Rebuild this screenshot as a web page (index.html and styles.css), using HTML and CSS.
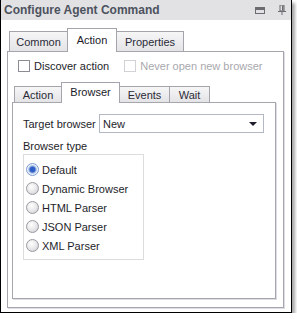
FILE: index.html
```html
<!DOCTYPE html>
<html lang="en">
<head>
    <meta charset="UTF-8">
    <title>Configure Agent Command</title>
    <link rel="stylesheet" href="styles.css">
</head>
<body>
    <div class="window">
        <div class="titlebar">
            <span class="title">Configure Agent Command</span>
            <svg class="tb-icon" width="10" height="7" viewBox="0 0 10 7">
                <rect x="0.5" y="0.5" width="9" height="6" fill="none" stroke="#6b6b70"/>
                <rect x="1" y="1" width="8" height="2" fill="#6b6b70"/>
            </svg>
            <svg class="tb-icon pin" width="8" height="10" viewBox="0 0 8 10">
                <rect x="2" y="0" width="4" height="6" fill="none" stroke="#6b6b70"/>
                <rect x="4" y="0.5" width="1.5" height="5" fill="#6b6b70"/>
                <rect x="0" y="6" width="8" height="1" fill="#6b6b70"/>
                <rect x="3.5" y="7" width="1" height="3" fill="#6b6b70"/>
            </svg>
        </div>
        <div class="content">
            <div class="tabs outer-tabs">
                <div class="tab tab-common">Common</div>
                <div class="tab tab-action active">Action</div>
                <div class="tab tab-props">Properties</div>
            </div>
            <div class="panel outer-panel">
                <div class="checks">
                    <label class="check"><span class="box"></span>Discover action</label>
                    <label class="check disabled"><span class="box"></span>Never open new browser</label>
                </div>
                <div class="tabs inner-tabs">
                    <div class="tab tab-action2">Action</div>
                    <div class="tab tab-browser active">Browser</div>
                    <div class="tab tab-events">Events</div>
                    <div class="tab tab-wait">Wait</div>
                </div>
                <div class="panel inner-panel">
                    <div class="field">
                        <span class="label">Target browser</span>
                        <div class="select">
                            <span>New</span>
                            <span class="arrow"></span>
                        </div>
                    </div>
                    <div class="group-label">Browser type</div>
                    <div class="group">
                        <div class="radio checked"><span class="dot"></span>Default</div>
                        <div class="radio"><span class="dot"></span>Dynamic Browser</div>
                        <div class="radio"><span class="dot"></span>HTML Parser</div>
                        <div class="radio"><span class="dot"></span>JSON Parser</div>
                        <div class="radio"><span class="dot"></span>XML Parser</div>
                    </div>
                </div>
            </div>
        </div>
    </div>
</body>
</html>
```

FILE: styles.css
```css
body {
    margin: 0;
    padding: 0;
    background: #fff;
    font-family: 'Liberation Sans', Arial, sans-serif;
    font-size: 11px;
    color: #1e1e2a;
}
.window {
    width: 290px;
    height: 312px;
    border: 1px solid #000;
    border-top: none;
    box-shadow: 3px 3px 3px rgba(0, 0, 0, 0.35);
    display: flex;
    flex-direction: column;
    background: #fff;
}
.titlebar {
    height: 20px;
    background: #e2e2e4;
    display: flex;
    align-items: center;
    padding: 0 5px 0 3px;
    box-sizing: border-box;
}
.title {
    flex: 1;
    font-weight: bold;
    font-size: 12px;
    color: #4d525e;
}
.tb-icon {
    display: block;
}
.tb-icon.pin {
    margin-left: 13px;
}
.content {
    flex: 1;
    display: flex;
    flex-direction: column;
    padding: 8px 7px 4px 6px;
}
.tabs {
    display: flex;
    align-items: flex-end;
    padding-left: 3px;
    position: relative;
    z-index: 1;
    margin-bottom: -1px;
}
.tab {
    box-sizing: border-box;
    border: 1px solid #a4a4ac;
    border-bottom: none;
    margin-left: -1px;
    margin-bottom: 1px;
    background: linear-gradient(#f6f6f7, #e4e4e7);
    color: #2a2a36;
    display: flex;
    align-items: center;
    justify-content: center;
    white-space: nowrap;
}
.outer-tabs .tab {
    height: 20px;
    padding-top: 1px;
}
.outer-tabs .tab.active {
    height: 24px;
    padding: 0 0 1px;
}
.inner-tabs .tab {
    height: 16px;
    padding-top: 1px;
}
.inner-tabs .tab.active {
    height: 21px;
    padding: 0 0 2px;
}
.tab-common { width: 59px; }
.tab-action { width: 50px; }
.tab-props { width: 68px; }
.tab-action2 { width: 48px; }
.tab-browser { width: 59px; }
.tab-events { width: 51px; }
.tab-wait { width: 41px; }
.tab.active {
    background: #fff;
    margin-bottom: 0;
    color: #1a1a28;
}
.panel {
    flex: 1;
    border: 1px solid #a6a6ae;
    box-shadow: 1px 1px 0 #dedee2;
    display: flex;
    flex-direction: column;
}
.outer-panel {
    padding: 7px 7px 8px 4px;
}
.checks {
    display: flex;
    padding-left: 6px;
    height: 13px;
    align-items: center;
}
.check {
    display: flex;
    align-items: center;
}
.check + .check {
    margin-left: 15px;
}
.box {
    width: 10px;
    height: 10px;
    border: 1px solid #8c8c94;
    background: #fff;
    margin-right: 4px;
}
.check.disabled {
    color: #a8a8ae;
}
.check.disabled .box {
    border-color: #d2d2d6;
}
.inner-tabs {
    margin-top: 10px;
}
.inner-panel {
    padding: 11px 11px 0 10px;
}
.field {
    display: flex;
    align-items: center;
}
.label {
    width: 76px;
}
.select {
    flex: 1;
    height: 17px;
    border: 1px solid #b4b8c2;
    display: flex;
    align-items: center;
    justify-content: space-between;
    padding: 0 6px 0 3px;
}
.arrow {
    width: 0;
    height: 0;
    border-left: 4px solid transparent;
    border-right: 4px solid transparent;
    border-top: 4px solid #1c1c2a;
}
.group-label {
    margin-top: 6px;
    height: 14px;
    line-height: 14px;
}
.group {
    width: 117px;
    height: 99px;
    margin-top: 1px;
    border: 1px solid #dcdcde;
    padding: 5px 0 0 2px;
}
.radio {
    height: 19px;
    display: flex;
    align-items: center;
}
.dot {
    width: 11px;
    height: 11px;
    border-radius: 50%;
    border: 1px solid #9a9aa2;
    background: radial-gradient(circle at 40% 35%, #ffffff, #e6e6e8 55%, #c4c4c8);
    margin-right: 3px;
}
.radio.checked .dot {
    border-color: #7c9bd0;
    background: radial-gradient(circle, #2f5fc4 0 2.5px, #9cb6e6 3.5px, #eef3fb 5px);
}
```
